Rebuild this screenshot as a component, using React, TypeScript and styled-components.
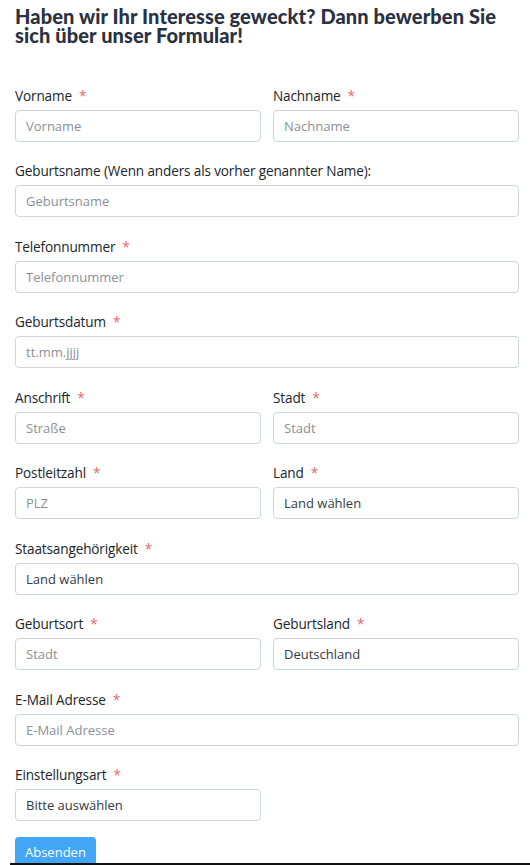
import * as React from 'react'
import styled, { createGlobalStyle } from 'styled-components'

const GlobalStyle = createGlobalStyle`
  html, body {
    margin: 0;
    padding: 0;
    background: #ffffff;
  }
  body {
    font-family: 'Open Sans', 'Liberation Sans', sans-serif;
    color: #212529;
  }
  * {
    box-sizing: border-box;
  }
`

const Page = styled.div`
  width: 530px;
  padding: 7px 11px 0 15px;
`

const Heading = styled.h2`
  margin: 0 0 40px 0;
  font-family: Lato, 'Liberation Sans', sans-serif;
  font-weight: 900;
  font-size: 20px;
  line-height: 19px;
  color: #2a3142;
  letter-spacing: 0.1px;
`

const Row = styled.div`
  display: grid;
  grid-template-columns: 1fr 1fr;
  column-gap: 12px;
`

const Field = styled.div<{ $last?: boolean }>`
  display: flex;
  flex-direction: column;
  margin-bottom: ${(p) => (p.$last ? '16px' : '18.45px')};
`

const Label = styled.label`
  font-size: 13.6px;
  line-height: 21px;
  font-weight: 500;
  letter-spacing: -0.15px;
  color: #212529;
  margin-bottom: 4px;
`

const Required = styled.span`
  color: #e36a6e;
  margin-left: 7px;
  font-weight: 400;
`

const inputBase = `
  height: 32px;
  width: 100%;
  padding: 0 10px;
  border: 1px solid #ced4da;
  border-radius: 4px;
  font-family: 'Open Sans', 'Liberation Sans', sans-serif;
  font-size: 13px;
  color: #343a40;
  background: #ffffff;
  outline: none;
`

const Input = styled.input`
  ${inputBase}
  &::placeholder {
    color: #8b9096;
  }
`

const Select = styled.select`
  ${inputBase}
  appearance: none;
  -webkit-appearance: none;
`

const SubmitButton = styled.button`
  display: inline-block;
  height: 30px;
  padding: 0 10px;
  border: none;
  border-radius: 4px;
  background: #42a5f5;
  color: #ffffff;
  font-family: 'Open Sans', 'Liberation Sans', sans-serif;
  font-size: 13px;
  cursor: pointer;
`

const BottomEdge = styled.div`
  position: fixed;
  left: 10px;
  right: 0;
  bottom: 0;
  height: 2px;
  background: #111111;
`

interface FieldDef {
  label: string
  required?: boolean
  placeholder?: string
  value?: string
}

const TextField = ({ label, required, placeholder }: FieldDef) => (
  <Field>
    <Label>
      {label}
      {required && <Required>*</Required>}
    </Label>
    <Input type="text" placeholder={placeholder} />
  </Field>
)

const SelectField = ({ label, required, value, last }: FieldDef & { last?: boolean }) => (
  <Field $last={last}>
    <Label>
      {label}
      {required && <Required>*</Required>}
    </Label>
    <Select defaultValue="">
      <option value="">{value}</option>
    </Select>
  </Field>
)

const App = () => (
  <Page>
    <GlobalStyle />
    <Heading>Haben wir Ihr Interesse geweckt? Dann bewerben Sie sich über unser Formular!</Heading>
    <form onSubmit={(e) => e.preventDefault()}>
      <Row>
        <TextField label="Vorname" required placeholder="Vorname" />
        <TextField label="Nachname" required placeholder="Nachname" />
      </Row>
      <TextField label="Geburtsname (Wenn anders als vorher genannter Name):" placeholder="Geburtsname" />
      <TextField label="Telefonnummer" required placeholder="Telefonnummer" />
      <TextField label="Geburtsdatum" required placeholder="tt.mm.jjjj" />
      <Row>
        <TextField label="Anschrift" required placeholder="Straße" />
        <TextField label="Stadt" required placeholder="Stadt" />
      </Row>
      <Row>
        <TextField label="Postleitzahl" required placeholder="PLZ" />
        <SelectField label="Land" required value="Land wählen" />
      </Row>
      <SelectField label="Staatsangehörigkeit" required value="Land wählen" />
      <Row>
        <TextField label="Geburtsort" required placeholder="Stadt" />
        <SelectField label="Geburtsland" required value="Deutschland" />
      </Row>
      <TextField label="E-Mail Adresse" required placeholder="E-Mail Adresse" />
      <Row>
        <SelectField label="Einstellungsart" required value="Bitte auswählen" last />
      </Row>
      <SubmitButton type="submit">Absenden</SubmitButton>
    </form>
    <BottomEdge />
  </Page>
)

export default App
